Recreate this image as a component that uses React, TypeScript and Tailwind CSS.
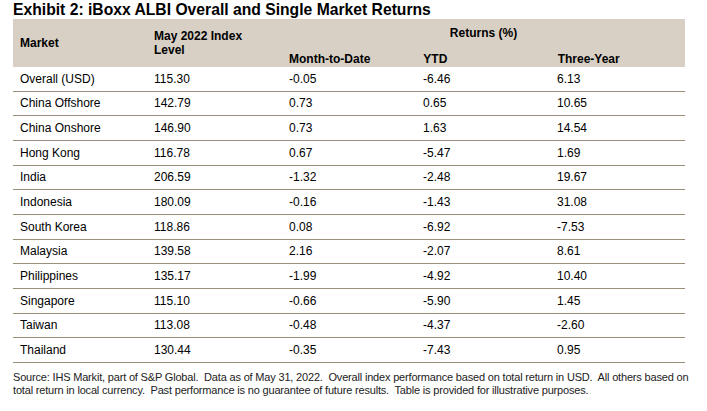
const rows = [
  ['Overall (USD)', '115.30', '-0.05', '-6.46', '6.13'],
  ['China Offshore', '142.79', '0.73', '0.65', '10.65'],
  ['China Onshore', '146.90', '0.73', '1.63', '14.54'],
  ['Hong Kong', '116.78', '0.67', '-5.47', '1.69'],
  ['India', '206.59', '-1.32', '-2.48', '19.67'],
  ['Indonesia', '180.09', '-0.16', '-1.43', '31.08'],
  ['South Korea', '118.86', '0.08', '-6.92', '-7.53'],
  ['Malaysia', '139.58', '2.16', '-2.07', '8.61'],
  ['Philippines', '135.17', '-1.99', '-4.92', '10.40'],
  ['Singapore', '115.10', '-0.66', '-5.90', '1.45'],
  ['Taiwan', '113.08', '-0.48', '-4.37', '-2.60'],
  ['Thailand', '130.44', '-0.35', '-7.43', '0.95'],
]

const cols = 'grid grid-cols-[134px_135px_134px_134px_135px]'

export default function App() {
  return (
    <div className="h-[411px] w-[707px] overflow-hidden bg-white pl-[13px] text-black [font-family:'Liberation_Sans',Arial,sans-serif]">
      <h1 className="h-[19px] pt-[1px] text-[15.7px] font-bold leading-[18px]">
        Exhibit 2: iBoxx ALBI Overall and Single Market Returns
      </h1>

      <div className="w-[672px]">
        <div className={`${cols} h-[48px] bg-[#d8d0c5] text-[12px] font-bold leading-[14px]`}>
          <div className="flex items-center pl-[7px]">Market</div>
          <div className="pl-[7px] pt-[10px]">
            May 2022 Index
            <br />
            Level
          </div>
          <div className="col-span-3 grid grid-cols-3">
            <div className="col-span-3 pt-[7px] text-center">Returns (%)</div>
            <div className="pl-[7px] pt-[10px]">Month-to-Date</div>
            <div className="pl-[7px] pt-[10px]">YTD</div>
            <div className="pl-[7px] pt-[10px]">Three-Year</div>
          </div>
        </div>

        {rows.map((row) => (
          <div
            key={row[0]}
            className={`${cols} h-[24.67px] items-center border-b border-[#9c8f7b] text-[12px] leading-[14px]`}
          >
            {row.map((cell, i) => (
              <div key={i} className="pl-[7px]">
                {cell}
              </div>
            ))}
          </div>
        ))}
      </div>

      <p className="mt-[8px] whitespace-nowrap text-[11px] leading-[13px] tracking-[-0.18px] text-[#222]">
        Source: IHS Markit, part of S&amp;P Global.&nbsp; Data as of May 31, 2022.&nbsp; Overall index performance based on
        total return in USD.&nbsp; All others based on
        <br />
        total return in local currency.&nbsp; Past performance is no guarantee of future results.&nbsp; Table is provided
        for illustrative purposes.
      </p>
    </div>
  )
}
